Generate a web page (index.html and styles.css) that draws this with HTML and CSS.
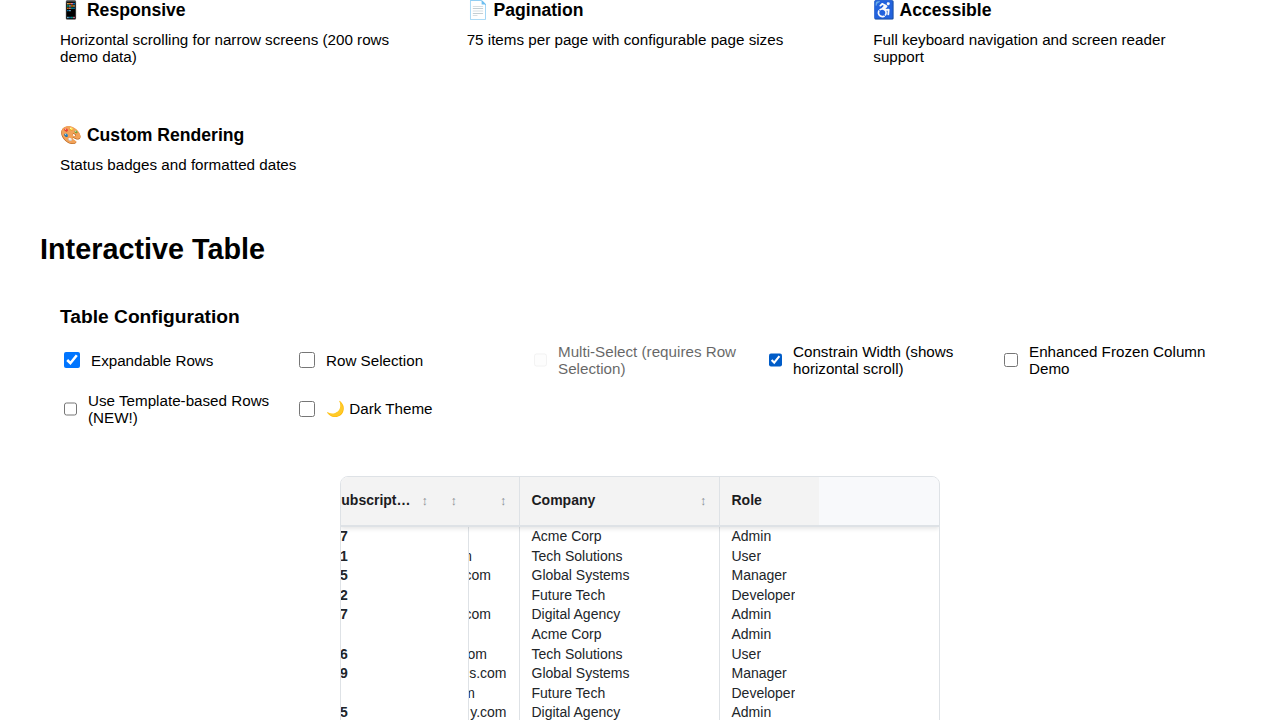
FILE: index.html
```html
<!DOCTYPE html>
<html lang="en">
<head>
<meta charset="utf-8">
<title>Interactive Table</title>
<link rel="stylesheet" href="styles.css">
</head>
<body>
<main class="page">
  <section class="features">
    <article class="feature"><h3>📱 Responsive</h3><p>Horizontal scrolling for narrow screens (200 rows demo data)</p></article>
    <article class="feature"><h3>📄 Pagination</h3><p>75 items per page with configurable page sizes</p></article>
    <article class="feature"><h3>♿ Accessible</h3><p>Full keyboard navigation and screen reader support</p></article>
    <article class="feature"><h3>🎨 Custom Rendering</h3><p>Status badges and formatted dates</p></article>
  </section>
  <h2 class="title">Interactive Table</h2>
  <section class="config">
    <h3 class="config-title">Table Configuration</h3>
    <div class="options">
      <label class="option"><input type="checkbox" checked><span>Expandable Rows</span></label>
      <label class="option"><input type="checkbox"><span>Row Selection</span></label>
      <label class="option disabled"><input class="small" type="checkbox" disabled><span>Multi-Select (requires Row Selection)</span></label>
      <label class="option"><input class="small active" type="checkbox" checked><span>Constrain Width (shows horizontal scroll)</span></label>
      <label class="option"><input class="small medium" type="checkbox"><span>Enhanced Frozen Column Demo</span></label>
      <label class="option"><input class="small" type="checkbox"><span>Use Template-based Rows (NEW!)</span></label>
      <label class="option"><input type="checkbox"><span>🌙 Dark Theme</span></label>
    </div>
  </section>
  <section class="table">
    <header class="head">
      <div class="h-frozen"><span class="h-name">ubscript…</span><i class="sort">↕</i><i class="sort second">↕</i></div>
      <div class="h-email"><i class="sort">↕</i></div>
      <div class="h-company"><span>Company</span><i class="sort">↕</i></div>
      <div class="h-role">Role</div>
    </header>
    <div class="body">
      <div class="row"><b class="id">7</b><span class="email"></span><span class="company">Acme Corp</span><span class="role">Admin</span></div>
      <div class="row"><b class="id">1</b><span class="email end-m">m</span><span class="company">Tech Solutions</span><span class="role">User</span></div>
      <div class="row"><b class="id">5</b><span class="email end-com">com</span><span class="company">Global Systems</span><span class="role">Manager</span></div>
      <div class="row"><b class="id">2</b><span class="email"></span><span class="company">Future Tech</span><span class="role">Developer</span></div>
      <div class="row"><b class="id">7</b><span class="email end-com">com</span><span class="company">Digital Agency</span><span class="role">Admin</span></div>
      <div class="row"><b class="id"></b><span class="email"></span><span class="company">Acme Corp</span><span class="role">Admin</span></div>
      <div class="row"><b class="id">6</b><span class="email end-om">om</span><span class="company">Tech Solutions</span><span class="role">User</span></div>
      <div class="row"><b class="id">9</b><span class="email">s.com</span><span class="company">Global Systems</span><span class="role">Manager</span></div>
      <div class="row"><b class="id"></b><span class="email end-wide">m</span><span class="company">Future Tech</span><span class="role">Developer</span></div>
      <div class="row"><b class="id">5</b><span class="email">y.com</span><span class="company">Digital Agency</span><span class="role">Admin</span></div>
    </div>
  </section>
</main>
</body>
</html>
```

FILE: styles.css
```css
* { box-sizing: border-box; }
html, body { height: 720px; overflow: hidden; }
body { margin: 0; background: #fff; color: #000; font-family: "Liberation Sans", Arial, sans-serif; }
h2, h3, p { margin: 0; }
.page { width: 1200px; height: 720px; margin: 0 auto; display: flex; flex-direction: column; overflow: hidden; }
.features { display: grid; grid-template-columns: repeat(3, 1fr); grid-template-rows: 105px 85px; gap: 20px; flex: none; }
.feature { padding: 0 20px; }
.feature h3 { font-size: 17.6px; line-height: 20px; margin-bottom: 11px; }
.feature p { font-size: 15.2px; line-height: 17px; }
.title { font-size: 28.8px; line-height: 34px; margin-top: 22px; flex: none; }
.config { padding: 40px 20px 0; height: 210px; flex: none; }
.config-title { font-size: 19.2px; line-height: 22px; }
.options { display: grid; grid-template-columns: repeat(5, 220px); gap: 15px; margin-top: 15px; }
.option { display: flex; align-items: center; gap: 8px; height: 34px; font-size: 15.2px; line-height: 17px; }
.option:last-child span { line-height: 16px; margin-top: -1px; }
.option input { width: 16px; height: 16px; margin: 3px 3px 3px 4px; flex: none; }
.option .small { width: 13px; height: 14px; }
.option .medium { width: 14px; }
.option .active { accent-color: #005cc8; }
.disabled { opacity: .6; }
.disabled input { opacity: .4; }
.table { width: 600px; height: 260px; flex: none; align-self: center; border: 1px solid #dee2e6; border-radius: 8px; border-bottom-left-radius: 0; border-bottom-right-radius: 0; overflow: hidden; font-size: 14px; color: #212529; }
.head { display: flex; height: 50px; position: relative; background: #f8f9fb; border-bottom: 2px solid #dee2e6; box-shadow: 0 2px 4px rgba(0,0,0,.1); font-weight: 700; color: #1c1c1e; }
.head > div { display: flex; align-items: center; background: #f3f3f3; padding-bottom: 2px; flex: none; }
.h-frozen { width: 128px; }
.h-name { width: 80.5px; padding-left: .3px; }
.second { margin-left: 22.5px; }
.head .h-email { width: 51px; justify-content: flex-end; padding-right: 12.5px; border-right: 1px solid #dee2e6; }
.head .h-company { width: 200px; justify-content: space-between; padding: 0 12.5px 2px 11.5px; border-right: 1px solid #dee2e6; }
.head .h-role { width: 99px; padding-left: 11.5px; }
.sort { font-style: normal; font-weight: 400; font-size: 12.8px; line-height: 14px; color: #888e94; padding-top: 1px; }
.row { display: flex; height: 19.6px; line-height: 19.6px; }
.row > * { flex: none; overflow: hidden; }
.id { width: 128px; border-right: 1px solid #dee2e6; text-indent: -1px; }
.email { width: 51px; display: flex; justify-content: flex-end; padding-right: 12.5px; border-right: 1px solid #dee2e6; }
.end-m { padding-right: 47px; }
.end-com { padding-right: 28px; }
.end-om { padding-right: 32px; }
.end-wide { padding-right: 44px; }
.company { width: 200px; padding-left: 11.5px; border-right: 1px solid #dee2e6; }
.role { padding-left: 11.5px; }
```
